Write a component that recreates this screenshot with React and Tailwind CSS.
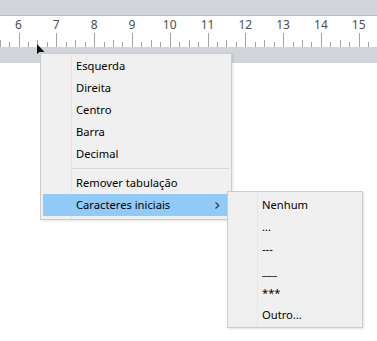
const CM = 37.8;
const numbers = [6, 7, 8, 9, 10, 11, 12, 13, 14, 15];

function rulerTicks() {
  const ticks = [];
  for (let k = -2; k <= 40; k++) {
    const x = Math.round(18.5 + k * (CM / 4)) + 0.5;
    if (x > 377) break;
    const kind = ((k % 4) + 4) % 4;
    const y1 = kind === 0 ? 33 : kind === 2 ? 40 : 42;
    ticks.push(<line key={k} x1={x} x2={x} y1={y1 - 16} y2={31} stroke="#a3a3a3" strokeWidth="1" />);
  }
  return ticks;
}

function Row({ children, active, arrow, sub }) {
  const pad = sub ? "pl-[34px]" : active ? "pl-[33px]" : "pl-[35px]";
  return (
    <div className={`relative flex h-[22px] items-center ${active ? "ml-[2px] mr-[4px] bg-[#91c9f7]" : ""} ${pad}`}>
      <span>{children}</span>
      {arrow && (
        <svg className="absolute right-[7px] top-[8px]" width="5" height="7" viewBox="0 0 5 7">
          <path d="M0.5 0.5 L3.8 3.5 L0.5 6.5" fill="none" stroke="#333" strokeWidth="1.1" />
        </svg>
      )}
    </div>
  );
}

export default function App() {
  return (
    <div
      className="relative h-[341px] w-[377px] overflow-hidden bg-white text-[11.2px] text-black"
      style={{ fontFamily: '"Noto Sans", "Liberation Sans", sans-serif' }}
    >
      <div className="h-[15px] bg-[#d1d4d8]" />
      <div className="h-px bg-[#b9bdc1]" />
      <div className="relative h-[31px] bg-white">
        {numbers.map((n) => (
          <span
            key={n}
            className="absolute top-[1px] w-[20px] -translate-x-1/2 text-center text-[12px] leading-[16px] text-[#4a4f55]"
            style={{ left: 18.5 + (n - 6) * CM }}
          >
            {n}
          </span>
        ))}
        <svg className="absolute left-0 top-0" width="377" height="31">
          {rulerTicks()}
        </svg>
      </div>
      <div className="h-[16px] bg-[#d1d4d8]" />

      <svg className="absolute left-[37px] top-[44px]" width="9" height="11" viewBox="0 0 9 11">
        <path d="M0 0 L0 10 L2.5 8 L7.5 8 Z" fill="#111" />
      </svg>

      <div className="absolute left-[40px] top-[53px] w-[192px] border border-[#cccccc] bg-[#f0f0f0] pb-[3px] pt-[1px] shadow-[1px_1px_2px_rgba(0,0,0,0.12)]">
        <div className="absolute bottom-0 left-[30px] top-0 w-px bg-[#e6e6e6]" />
        <div className="relative">
          <Row>Esquerda</Row>
          <Row>Direita</Row>
          <Row>Centro</Row>
          <Row>Barra</Row>
          <Row>Decimal</Row>
          <div className="flex h-[7px] items-center pl-[30px] pr-[2px]">
            <div className="h-px w-full bg-[#d7d7d7]" />
          </div>
          <Row>Remover tabulação</Row>
          <Row active arrow>
            Caracteres iniciais
          </Row>
        </div>
      </div>

      <div className="absolute left-[227px] top-[191px] w-[136px] border border-[#cccccc] bg-[#f0f0f0] pb-px pt-[2px] shadow-[1px_1px_2px_rgba(0,0,0,0.12)]">
        <div className="absolute bottom-0 left-[29px] top-0 w-px bg-[#e6e6e6]" />
        <div className="relative">
          <Row sub>Nenhum</Row>
          <Row sub>...</Row>
          <Row sub>---</Row>
          <Row sub>___</Row>
          <Row sub>***</Row>
          <Row sub>Outro...</Row>
        </div>
      </div>
    </div>
  );
}
